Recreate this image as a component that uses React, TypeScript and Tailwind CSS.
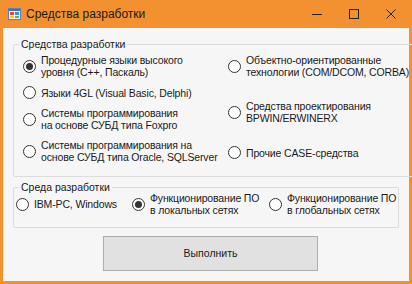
import React from "react";

const font = { fontFamily: '"Liberation Sans", Arial, sans-serif' };

function Radio({ checked = false }: { checked?: boolean }) {
  return (
    <span className="flex h-[13px] w-[13px] shrink-0 items-center justify-center rounded-full border border-[#333333] bg-white">
      {checked && <span className="h-[7px] w-[7px] rounded-full bg-[#333333]" />}
    </span>
  );
}

function Option({
  lines,
  checked,
  className = "",
}: {
  lines: string[];
  checked?: boolean;
  className?: string;
}) {
  return (
    <div className={`flex items-center gap-[5px] ${className}`}>
      <Radio checked={checked} />
      <div className="text-[10.5px] leading-[12px] tracking-[-0.15px] text-[#1a1a1a]">
        {lines.map((l) => (
          <div key={l} className="whitespace-nowrap">
            {l}
          </div>
        ))}
      </div>
    </div>
  );
}

function AppIcon() {
  return (
    <svg width="13" height="12" viewBox="0 0 13 12" className="shrink-0">
      <rect x="0.5" y="0.5" width="12" height="11" fill="#f4f4f4" stroke="#5a7fb0" />
      <rect x="1" y="1" width="11" height="2" fill="#3d6fc2" />
      <rect x="2" y="4" width="4" height="3" fill="#e04b3c" />
      <rect x="7" y="4" width="4" height="3" fill="#3d8fd6" />
      <rect x="2" y="8" width="4" height="2" fill="#f2c230" />
      <rect x="7" y="8" width="4" height="2" fill="#63b34a" />
    </svg>
  );
}

export default function App() {
  return (
    <div className="flex h-[284px] w-[412px] flex-col bg-[#f39131]" style={font}>
      {/* Title bar */}
      <div className="flex h-[28px] items-center pl-[8px] text-[#1a1a1a]">
        <AppIcon />
        <span className="ml-[5px] text-[12px]">Средства разработки</span>
        <div className="ml-auto flex items-center">
          <span className="flex w-[37px] justify-center">
            <span className="h-px w-[10px] bg-[#222]" />
          </span>
          <span className="flex w-[37px] justify-center">
            <span className="h-[10px] w-[10px] border border-[#222]" />
          </span>
          <span className="flex w-[40px] justify-center pr-[2px]">
            <svg width="10" height="10" viewBox="0 0 10 10">
              <path d="M0.5 0.5 L9.5 9.5 M9.5 0.5 L0.5 9.5" stroke="#222" strokeWidth="1" />
            </svg>
          </span>
        </div>
      </div>

      {/* Client area */}
      <div className="mx-[3px] mb-[3px] flex flex-1 flex-col bg-[#f6f6f6] px-[10px]">
        <fieldset className="mt-[9px] h-[140px] rounded-[2px] border border-[#dcdcdc] px-[9px]">
          <legend className="ml-[-4px] px-[2px] text-[10.5px] leading-[14px] text-[#1a1a1a]">
            Средства разработки
          </legend>
          <div className="flex pt-[3px]">
            <div className="flex w-[205px] flex-col gap-[8px]">
              <Option checked lines={["Процедурные языки высокого", "уровня (C++, Паскаль)"]} />
              <Option lines={["Языки 4GL (Visual Basic, Delphi)"]} />
              <Option lines={["Системы программирования", "на основе СУБД типа Foxpro"]} />
              <Option lines={["Системы программирования на", "основе СУБД типа Oracle, SQLServer"]} />
            </div>
            <div className="flex flex-col gap-[22px]">
              <Option lines={["Объектно-ориентированные", "технологии (COM/DCOM, CORBA)"]} />
              <Option lines={["Средства проектирования", "BPWIN/ERWINERX"]} />
              <Option lines={["Прочие CASE-средства"]} />
            </div>
          </div>
        </fieldset>

        <fieldset className="mt-[3px] h-[48px] rounded-[2px] border border-[#dcdcdc] px-[2px]">
          <legend className="ml-[3px] px-[2px] text-[10.5px] leading-[14px] text-[#1a1a1a]">
            Среда разработки
          </legend>
          <div className="-mt-[2px] flex items-center">
            <Option className="w-[116px]" lines={["IBM-PC, Windows"]} />
            <Option className="w-[137px]" checked lines={["Функционирование ПО", "в локальных сетях"]} />
            <Option lines={["Функционирование ПО", "в глобальных сетях"]} />
          </div>
        </fieldset>

        <button className="ml-[90px] mt-[8px] h-[35px] w-[215px] border border-[#adadad] bg-[#e1e1e1] text-[10.5px] text-[#1a1a1a]">
          Выполнить
        </button>
      </div>
    </div>
  );
}
